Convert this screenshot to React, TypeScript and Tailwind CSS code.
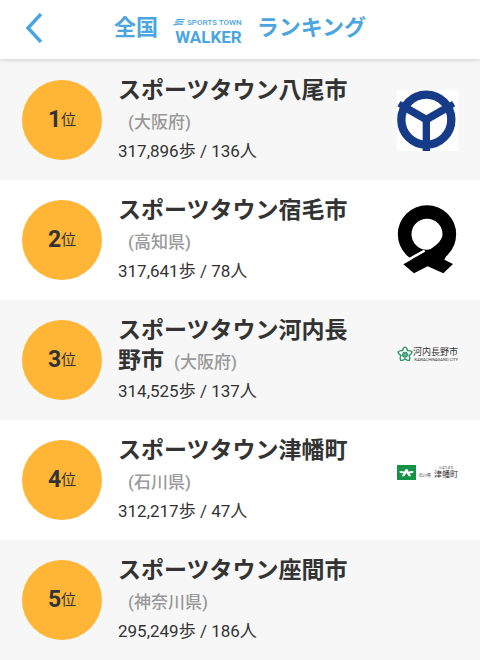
import type { ReactNode } from "react";

function YaoEmblem() {
  return (
    <svg role="img" aria-label="八尾市" viewBox="51 54 183 183" className="block w-full bg-white">
      <g fill="none" stroke="#163b88">
        <circle cx="139" cy="143" r="75" strokeWidth="25" />
        <path d="M139 140V237" strokeWidth="22" />
        <path d="M66 101L139 143L212 101" strokeWidth="23" />
        <path d="M57 95L70 103M221 95L208 103" strokeWidth="18" />
      </g>
    </svg>
  );
}

function SukumoEmblem() {
  return (
    <svg role="img" aria-label="宿毛市" viewBox="51 42 183 210" className="block w-full">
      <circle cx="141" cy="130" r="67" fill="none" stroke="#000" strokeWidth="41" />
      <path d="M66 217L134 179" stroke="#fff" strokeWidth="8" />
      <path d="M70 220L134 184C158 171 176 160 187 138L215 160L193 206L219 219L190 247L143 226L102 247Z" />
    </svg>
  );
}

function KawachinaganoLogo() {
  return (
    <div className="flex items-center justify-between pb-3 text-[#333]">
      <svg aria-hidden="true" viewBox="0 0 48 48" className="w-4 shrink-0">
        <path
          d="M24 3C29 5 31 10 31 14C37 13 42 14 45 18C43 24 39 27 36 28C39 33 39 39 37 43C31 44 27 41 24 38C21 41 17 44 11 43C9 39 9 33 12 28C9 27 5 24 3 18C6 14 11 13 17 14C17 10 19 5 24 3Z"
          fill="#fff"
          stroke="#2c9568"
          strokeWidth="4"
        />
        <circle cx="24" cy="26" r="9" fill="#2c9568" />
        <path d="M24 18V34M17 23L31 29M31 23L17 29" stroke="#8fcbb0" strokeWidth="1.5" />
      </svg>
      <div className="flex flex-col items-end whitespace-nowrap">
        <span className="text-[9px] leading-[10px]">河内長野市</span>
        <span className="text-[4px] leading-[5px]">KAWACHINAGANO CITY</span>
      </div>
    </div>
  );
}

function TsubataLogo() {
  return (
    <div className="flex items-end justify-between pb-4 text-[#333]">
      <svg aria-hidden="true" viewBox="0 0 57 45" className="w-[19px] shrink-0">
        <rect width="57" height="45" fill="#159447" />
        <path d="M6 20C12 17 17 18 22 20C24 14 26 12 28.500 12C31 12 33 14 35 20C40 18 45 17 51 20C46 25 41 25 37 25L43 34H35L28.500 24L22 34H14L20 25C16 25 11 25 6 20Z" fill="#fff" />
      </svg>
      <span className="text-[4px] leading-[8px] whitespace-nowrap">石川県</span>
      <span className="flex flex-col items-center whitespace-nowrap">
        <span className="text-[3px] leading-[4px]">つばたまち</span>
        <span className="text-[8px] leading-[10px]">津幡町</span>
      </span>
    </div>
  );
}

type Town = {
  name: string;
  prefecture: string;
  steps: string;
  people: number;
  logo?: ReactNode;
};

const towns: Town[] = [
  { name: "八尾市", prefecture: "大阪府", steps: "317,896", people: 136, logo: <YaoEmblem /> },
  { name: "宿毛市", prefecture: "高知県", steps: "317,641", people: 78, logo: <SukumoEmblem /> },
  { name: "河内長野市", prefecture: "大阪府", steps: "314,525", people: 137, logo: <KawachinaganoLogo /> },
  { name: "津幡町", prefecture: "石川県", steps: "312,217", people: 47, logo: <TsubataLogo /> },
  { name: "座間市", prefecture: "神奈川県", steps: "295,249", people: 186 },
];

function WalkerLogo() {
  return (
    <span className="flex flex-col items-end pt-2 whitespace-nowrap">
      <span className="flex items-center gap-[2px]">
        <svg aria-hidden="true" viewBox="0 0 36 21" className="w-3">
          <path d="M10 3Q20 0 35 2M6 10Q18 6 32 9M1 18Q14 13 29 16" fill="none" stroke="currentColor" strokeWidth="4" />
        </svg>
        <span className="text-[8px] leading-[10px] font-medium">SPORTS TOWN</span>
      </span>
      <span className="text-[17px] leading-[18px] font-bold">WALKER</span>
    </span>
  );
}

export default function App() {
  return (
    <div lang="ja" className="bg-white font-['Roboto','Noto_Sans_CJK_JP',sans-serif] text-[#333]">
      <header className="relative z-10 flex h-[59px] items-center justify-center bg-white pb-1 text-[#4ba5de] shadow-[0_1px_4px_rgba(0,0,0,0.2)]">
        <button type="button" aria-label="戻る" className="absolute left-6 p-0">
          <svg aria-hidden="true" viewBox="0 0 20 30" className="block w-5">
            <path d="M17 1L4 15L17 29" fill="none" stroke="currentColor" strokeWidth="3.500" />
          </svg>
        </button>
        <h1 className="flex items-center gap-[15px] text-[22px] leading-[30px] font-bold">
          <span>全国</span>
          <WalkerLogo />
          <span>ランキング</span>
        </h1>
      </header>
      <main>
        <ol className="pt-px">
          {towns.map((town, index) => (
            <li key={town.name} className="flex min-h-[120px] items-center pr-[22px] pl-[22px] odd:bg-[#f7f7f7]">
              <div className="flex size-20 shrink-0 items-center justify-center rounded-full bg-[#ffb636]">
                <span className="text-[23px] leading-[30px] font-bold">{index + 1}</span>
                <span className="text-[15px] leading-[30px]">位</span>
              </div>
              <div className="ml-4 min-w-0 flex-1 pt-[2px]">
                <h2 className="max-w-[238px] text-[23px] leading-[30px] font-bold">
                  スポーツタウン{town.name}
                  <span className="ml-[10px] inline-block text-[17px] leading-[20px] font-medium text-[#999]">({town.prefecture})</span>
                </h2>
                <p className="text-[17px] leading-[30px]">
                  {town.steps}歩 / {town.people}人
                </p>
              </div>
              <div className="w-[61px] shrink-0">{town.logo}</div>
            </li>
          ))}
        </ol>
      </main>
    </div>
  );
}
